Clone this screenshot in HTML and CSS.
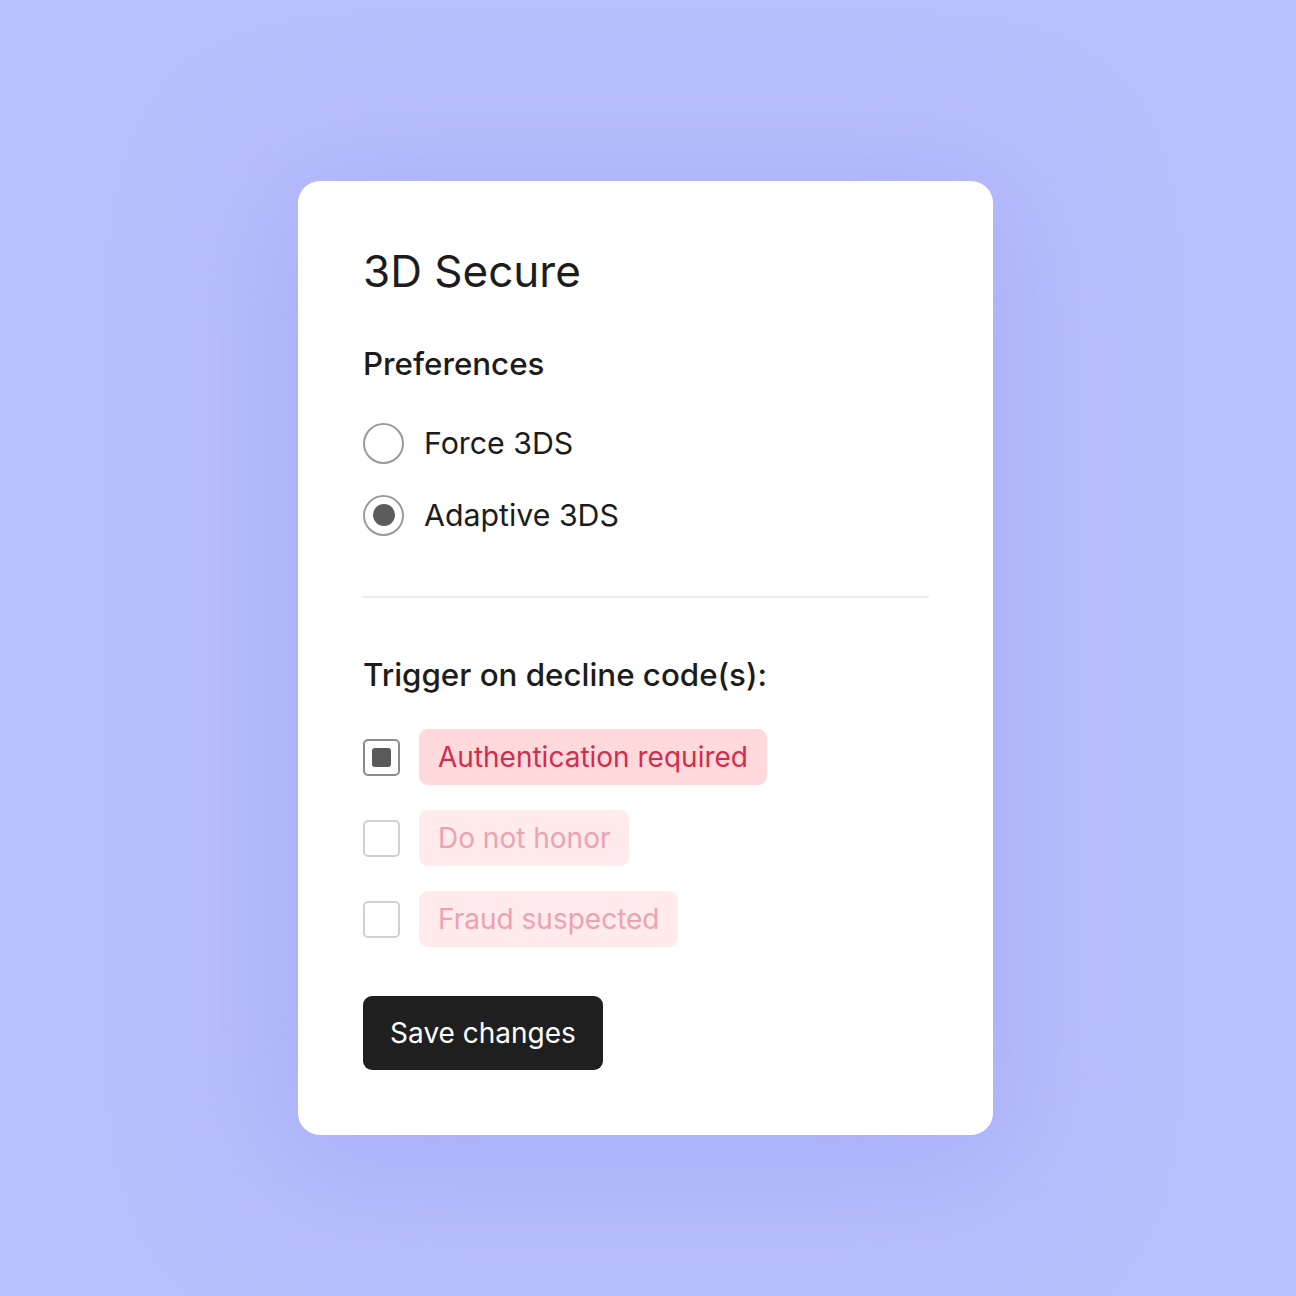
FILE: index.html
```html
<!DOCTYPE html>
<html>
<head>
<meta charset="utf-8">
<link rel="stylesheet" href="styles.css">
</head>
<body>
<div class="page">
  <div class="card">
    <h1 class="title">3D Secure</h1>
    <h2 class="section">Preferences</h2>
    <div class="radios">
      <label class="radio-row"><span class="radio"></span><span class="radio-label">Force 3DS</span></label>
      <label class="radio-row"><span class="radio radio--on"><span class="radio-dot"></span></span><span class="radio-label">Adaptive 3DS</span></label>
    </div>
    <hr class="divider">
    <h2 class="section section--trigger">Trigger on decline code(s):</h2>
    <div class="codes">
      <div class="code-row"><span class="check check--on"><span class="check-fill"></span></span><span class="chip chip--on">Authentication required</span></div>
      <div class="code-row"><span class="check"></span><span class="chip">Do not honor</span></div>
      <div class="code-row"><span class="check"></span><span class="chip">Fraud suspected</span></div>
    </div>
    <button class="save">Save changes</button>
  </div>
</div>
</body>
</html>
```
FILE: styles.css
```css
* { box-sizing: border-box; }
html, body { margin: 0; padding: 0; }
body {
  background: #bbc0fe;
  font-family: Inter, "Noto Sans", sans-serif;
  color: #1c1c1c;
}
.page {
  width: 1296px;
  height: 1296px;
  padding-top: 181px;
  padding-left: 298px;
}
.card {
  width: 695px;
  height: 954px;
  background: #ffffff;
  border-radius: 22px;
  padding: 0 64px 0 65px;
  display: flex;
  flex-direction: column;
  align-items: flex-start;
  box-shadow: 0 20px 140px 40px rgba(140, 145, 240, 0.35);
}
.title {
  margin: 66px 0 0 0;
  font-size: 44px;
  line-height: 48px;
  font-weight: 400;
  color: #1c1c1c;
}
.section {
  margin: 52px 0 0 0;
  font-size: 31.3px;
  line-height: 34px;
  font-weight: 500;
  color: #1c1c1c;
}
.radios {
  margin-top: 42px;
  display: flex;
  flex-direction: column;
  gap: 32px;
}
.radio-row {
  display: flex;
  align-items: center;
  gap: 20px;
  height: 40px;
}
.radio {
  width: 41px;
  height: 41px;
  border-radius: 50%;
  border: 2.5px solid #9a9a9a;
  display: flex;
  align-items: center;
  justify-content: center;
}
.radio-dot {
  width: 22px;
  height: 22px;
  border-radius: 50%;
  background: #5c5c5c;
}
.radio-label {
  font-size: 30.3px;
  line-height: 40px;
  color: #1c1c1c;
}
.divider {
  align-self: stretch;
  border: 0;
  height: 2px;
  background: #ececec;
  margin: 61px 0 0 0;
}
.section--trigger {
  margin-top: 60px;
}
.codes {
  margin-top: 37px;
  display: flex;
  flex-direction: column;
  gap: 25px;
}
.code-row {
  display: flex;
  align-items: center;
  gap: 19px;
}
.check {
  width: 37px;
  height: 37px;
  border-radius: 5px;
  border: 2.5px solid #d0d0d0;
  display: flex;
  align-items: center;
  justify-content: center;
}
.check--on {
  border-color: #8c8c8c;
}
.check-fill {
  width: 19px;
  height: 19px;
  border-radius: 3px;
  background: #5a5a5a;
}
.chip {
  height: 56px;
  padding: 0 19px 0 19px;
  border-radius: 9px;
  background: #ffeaec;
  color: #eca3b0;
  font-size: 28px;
  line-height: 56px;
  display: inline-flex;
  align-items: center;
}
.chip--on {
  background: #ffd9dc;
  color: #d12d4c;
}
.save {
  margin-top: 49px;
  width: 240px;
  height: 74px;
  border: 0;
  border-radius: 9px;
  background: #1f1f1f;
  color: #ffffff;
  font-family: Inter, "Noto Sans", sans-serif;
  font-size: 28px;
  padding: 0;
}
```
